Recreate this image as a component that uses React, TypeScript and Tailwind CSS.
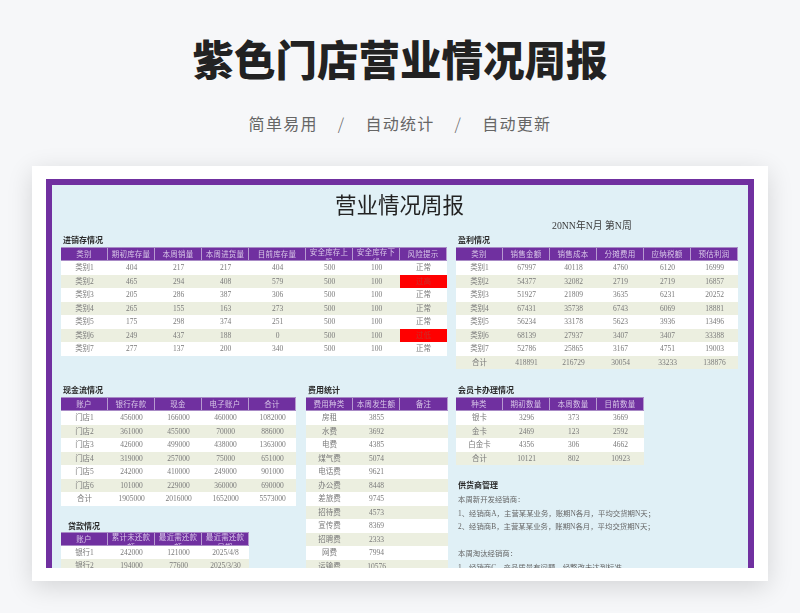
const sans = "font-['Noto_Sans_CJK_SC','Noto_Sans',sans-serif]";
const serif = "font-['Liberation_Serif','Noto_Sans_CJK_SC',serif]";

type Cell = string | number;

function Table({ widths, head, rows }: { widths: number[]; head: string[]; rows: Cell[][] }) {
  const cols = widths.map((w) => `${w}px`).join(" ");
  return (
    <div className="w-fit">
      <div className="grid h-[14px] bg-[#7030a0] border-y border-[#a98bc6]" style={{ gridTemplateColumns: cols }}>
        {head.map((h, i) => (
          <div
            key={i}
            className={`overflow-hidden px-[3px] text-center text-[7.5px] tracking-[0.2px] text-[#d8c6e8] border-r border-[#b79ad0] ${h.length > 5 ? "leading-[10px]" : "leading-[13px]"}`}
          >
            {h}
          </div>
        ))}
      </div>
      {rows.map((r, ri) => (
        <div
          key={ri}
          className={`grid h-[13.5px] ${ri % 2 === 0 ? "bg-white" : "bg-[#ecefe0]"}`}
          style={{ gridTemplateColumns: cols }}
        >
          {r.map((c, ci) => {
            const alert = c === "过高" || c === "过低";
            return (
              <div
                key={ci}
                className={`overflow-hidden text-center text-[7.5px] leading-[14.5px] ${alert ? "bg-[#ff0000] text-[#c8302a]" : "text-[#7a7a7a]"}`}
              >
                {c}
              </div>
            );
          })}
        </div>
      ))}
    </div>
  );
}

function Heading({ children, className = "" }: { children: string; className?: string }) {
  return <div className={`h-[13px] pl-[2px] text-[8px] leading-[13px] font-bold text-[#2b2b2b] ${className}`}>{children}</div>;
}

const stock: Cell[][] = [
  ["类别1", 404, 217, 217, 404, 500, 100, "正常"],
  ["类别2", 465, 294, 408, 579, 500, 100, "过高"],
  ["类别3", 205, 286, 387, 306, 500, 100, "正常"],
  ["类别4", 265, 155, 163, 273, 500, 100, "正常"],
  ["类别5", 175, 298, 374, 251, 500, 100, "正常"],
  ["类别6", 249, 437, 188, 0, 500, 100, "过低"],
  ["类别7", 277, 137, 200, 340, 500, 100, "正常"],
];
const profit: Cell[][] = [
  ["类别1", 67997, 40118, 4760, 6120, 16999],
  ["类别2", 54377, 32082, 2719, 2719, 16857],
  ["类别3", 51927, 21809, 3635, 6231, 20252],
  ["类别4", 67431, 35738, 6743, 6069, 18881],
  ["类别5", 56234, 33178, 5623, 3936, 13496],
  ["类别6", 68139, 27937, 3407, 3407, 33388],
  ["类别7", 52786, 25865, 3167, 4751, 19003],
  ["合计", 418891, 216729, 30054, 33233, 138876],
];
const cash: Cell[][] = [
  ["门店1", 456000, 166000, 460000, 1082000],
  ["门店2", 361000, 455000, 70000, 886000],
  ["门店3", 426000, 499000, 438000, 1363000],
  ["门店4", 319000, 257000, 75000, 651000],
  ["门店5", 242000, 410000, 249000, 901000],
  ["门店6", 101000, 229000, 360000, 690000],
  ["合计", 1905000, 2016000, 1652000, 5573000],
];
const loan: Cell[][] = [
  ["银行1", 242000, 121000, "2025/4/8"],
  ["银行2", 194000, 77600, "2025/3/30"],
];
const fees: Cell[][] = [
  ["房租", 3855, ""],
  ["水费", 3692, ""],
  ["电费", 4385, ""],
  ["煤气费", 5074, ""],
  ["电话费", 9621, ""],
  ["办公费", 8448, ""],
  ["差旅费", 9745, ""],
  ["招待费", 4573, ""],
  ["宣传费", 8369, ""],
  ["招聘费", 2333, ""],
  ["网费", 7994, ""],
  ["运输费", 10576, ""],
];
const member: Cell[][] = [
  ["银卡", 3296, 373, 3669],
  ["金卡", 2469, 123, 2592],
  ["白金卡", 4356, 306, 4662],
  ["合计", 10121, 802, 10923],
];
const supplier = [
  "本周新开发经销商：",
  "1、经销商A，主营某某业务，账期N各月，平均交货期N天；",
  "2、经销商B，主营某某业务，账期N各月，平均交货期N天；",
  "",
  "本周淘汰经销商：",
  "1、经销商C，产品质量有问题，经整改未达到标准。",
];

export default function App() {
  return (
    <div className={`h-[613px] w-[800px] overflow-hidden bg-[#f6f7f9] ${sans}`}>
      <h1 className="pt-[30px] text-center text-[41.5px] leading-[56px] font-black text-[#222222]">紫色门店营业情况周报</h1>
      <div className="mt-[25px] flex justify-center gap-[20px] text-[16px] leading-[24px] tracking-[1.3px] text-[#666666]">
        <span>简单易用</span>
        <span className="font-light">/</span>
        <span>自动统计</span>
        <span className="font-light">/</span>
        <span>自动更新</span>
      </div>
      <div className="mx-[32px] mt-[31px] h-[415px] bg-white px-[14px] py-[13px] shadow-[0_6px_24px_rgba(0,0,0,0.14)]">
        <div className={`h-[389px] overflow-hidden border-x-[6px] border-t-[6px] border-[#7030a0] bg-[#e0f0f6] pl-[9px] ${serif} blur-[0.25px]`}>
          <div className="pt-[8px] pl-[274px] text-[21.5px] leading-[26px] text-[#222222]">营业情况周报</div>
          <div className="pl-[491px] text-[9.8px] leading-[14px] text-[#3a3a3a]">20NN年N月 第N周</div>
          <div className="mt-[1px] flex h-[136px] gap-[9px]">
            <div>
              <Heading>进销存情况</Heading>
              <Table
                widths={[47, 47, 47, 47, 57, 47, 47, 47]}
                head={["类别", "期初库存量", "本周销量", "本周进货量", "目前库存量", "安全库存上限", "安全库存下线", "风险提示"]}
                rows={stock}
              />
            </div>
            <div>
              <Heading>盈利情况</Heading>
              <Table
                widths={[47, 47, 47, 47, 47, 47]}
                head={["类别", "销售金额", "销售成本", "分摊费用", "应纳税额", "预估利润"]}
                rows={profit}
              />
            </div>
          </div>
          <div className="mt-[14px] flex gap-[10px]">
            <div>
              <Heading>现金流情况</Heading>
              <Table widths={[47, 47, 47, 47, 47]} head={["账户", "银行存款", "现金", "电子账户", "合计"]} rows={cash} />
              <Heading className="mt-[13px] pl-[7px] pt-[1px] text-[8.5px]">贷款情况</Heading>
              <Table widths={[47, 47, 47, 47]} head={["账户", "累计未还款额", "最近需还款额", "最近需还款日期"]} rows={loan} />
            </div>
            <div>
              <Heading>费用统计</Heading>
              <Table widths={[47, 47, 48]} head={["费用种类", "本周发生额", "备注"]} rows={fees} />
            </div>
            <div className="ml-[-2px]">
              <Heading>会员卡办理情况</Heading>
              <Table widths={[47, 47, 47, 47]} head={["种类", "期初数量", "本周数量", "目前数量"]} rows={member} />
              <Heading className="mt-[14px]">供货商管理</Heading>
              {supplier.map((s, i) => (
                <div key={i} className="h-[13.5px] pl-[2px] pt-[1px] text-[7.4px] leading-[13.5px] whitespace-nowrap text-[#666666]">
                  {s}
                </div>
              ))}
            </div>
          </div>
        </div>
      </div>
    </div>
  );
}
